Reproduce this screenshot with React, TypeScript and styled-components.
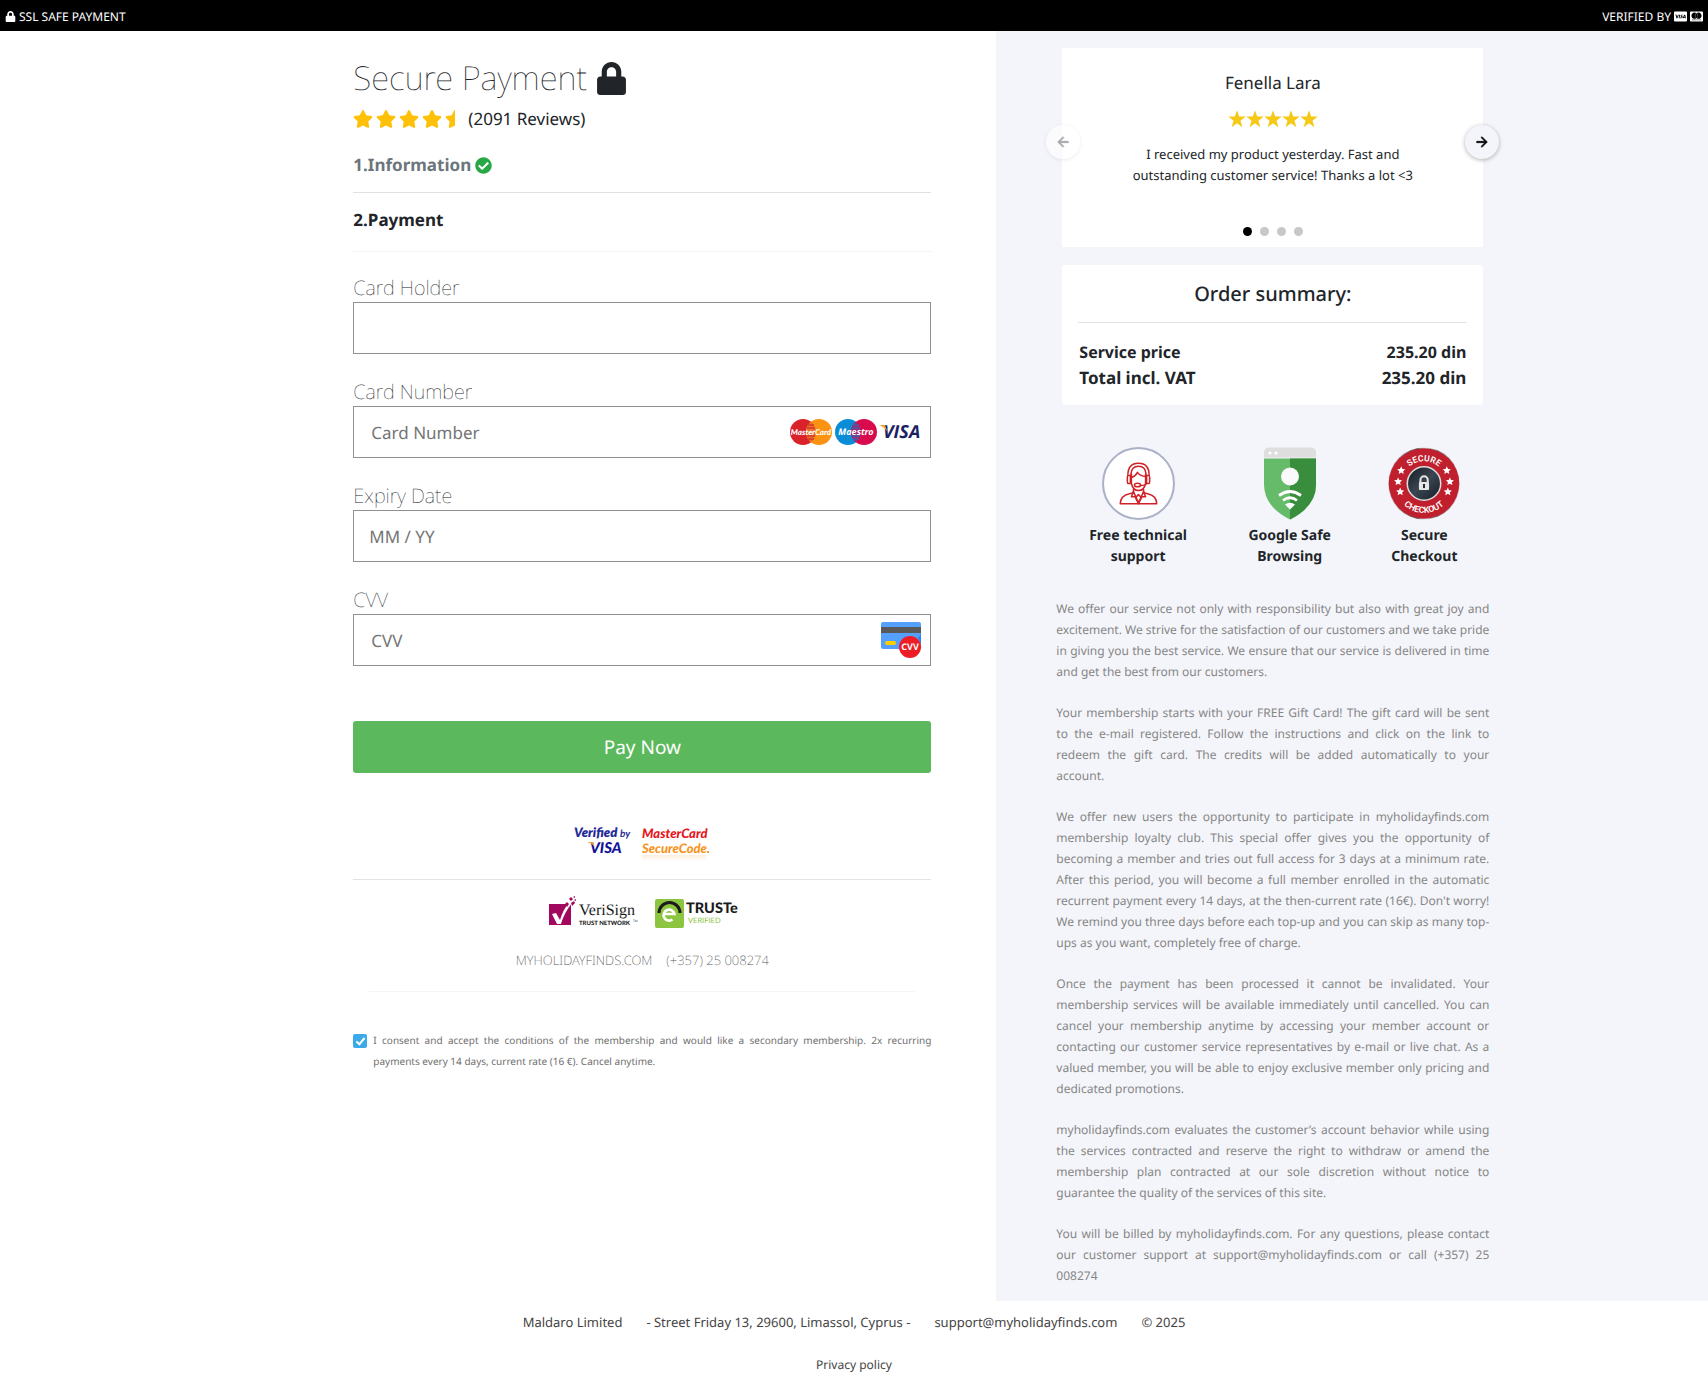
import React, { useId, useState } from "react";
import styled, { createGlobalStyle } from "styled-components";
import {
  FaLock,
  FaStar,
  FaStarHalf,
  FaCheckCircle,
  FaCcVisa,
  FaCcMastercard,
} from "react-icons/fa";
import { MdArrowBack, MdArrowForward } from "react-icons/md";

const fontStack = `"Noto Sans", "Open Sans", sans-serif`;

const GlobalStyle = createGlobalStyle`
  *, *::before, *::after { box-sizing: border-box; }
  body {
    margin: 0;
    background: #fff;
    color: #212529;
    font-family: ${fontStack};
    font-size: 16px;
    text-rendering: geometricPrecision;
  }
  h1, h2, h3, p, ul { margin: 0; padding: 0; }
  a { color: inherit; text-decoration: none; }
  svg { display: block; flex: none; }
`;

/* ---------- top bar ---------- */

const TopBar = styled.header`
  display: flex;
  justify-content: space-between;
  align-items: center;
  height: 31px;
  padding: 2px 5px 0;
  background: #000;
  color: #fff;
  font-size: 12px;
`;

const TopBarItem = styled.div`
  display: flex;
  align-items: center;
  gap: 3px;
`;

/* ---------- page columns ---------- */

const Columns = styled.main`
  display: grid;
  grid-template-columns: 7fr 5fr;
`;

const CheckoutSide = styled.section`
  display: flex;
  justify-content: flex-end;
  padding: 25px 65px 40px;
`;

const CheckoutColumn = styled.div`
  width: 100%;
  max-width: 578px;
`;

const SummarySide = styled.aside`
  padding: 17px 66px 15px;
  background: #f4f5fa;
`;

const SummaryColumn = styled.div`
  width: 100%;
  max-width: 421px;
`;

/* ---------- checkout ---------- */

const Title = styled.h1`
  display: flex;
  align-items: center;
  gap: 8px;
  font-size: 33px;
  font-weight: 100;
  line-height: 44px;
`;

const Rating = styled.div`
  display: flex;
  align-items: center;
  gap: 3px;
  margin-top: 5px;
  font-size: 17px;
  line-height: 28px;
`;

const RatingStars = styled.div`
  display: flex;
  gap: 3px;
  color: #ffc107;
`;

const Step = styled.h2<{ $done?: boolean }>`
  display: flex;
  align-items: center;
  gap: 4px;
  padding: 14px 0 ${(p) => (p.$done ? 14 : 18)}px;
  margin-top: ${(p) => (p.$done ? 5 : 0)}px;
  border-bottom: 1px solid ${(p) => (p.$done ? "#dee2e6" : "#f3f3f5")};
  color: ${(p) => (p.$done ? "#6c757d" : "#212529")};
  font-size: 17px;
  font-weight: 700;
  line-height: 26px;

  svg { color: #28a745; }
`;

const PaymentForm = styled.form`
  display: flex;
  flex-direction: column;
  gap: 24px;
  padding-top: 22px;
`;

const FieldLabel = styled.label`
  display: block;
  font-size: 20px;
  font-weight: 100;
  line-height: 28px;
`;

const FieldBox = styled.div`
  display: flex;
  align-items: center;
  height: 52px;
  padding-right: 9px;
  border: 1px solid #8f8f8f;
  background: #fff;
`;

const FieldInput = styled.input<{ $indent: number }>`
  flex: 1;
  min-width: 0;
  height: 100%;
  padding: 0 0 0 ${(p) => p.$indent}px;
  border: 0;
  outline: 0;
  background: transparent;
  color: #212529;
  font-family: inherit;
  font-size: 17px;
  text-rendering: inherit;

  &::placeholder { color: #757575; opacity: 1; }
`;

const PayButton = styled.button`
  height: 52px;
  margin-top: 31px;
  border: 0;
  border-radius: 3px;
  background: #5cb85c;
  color: #fff;
  font-family: inherit;
  font-size: 19px;
  text-rendering: inherit;
  cursor: pointer;
`;

const LogoRow = styled.div<{ $ruled?: boolean }>`
  display: flex;
  justify-content: center;
  gap: ${(p) => (p.$ruled ? 10 : 14)}px;
  padding: ${(p) => (p.$ruled ? "50px 0 14px" : "14px 0 10px")};
  border-bottom: ${(p) => (p.$ruled ? "1px solid #e3e3e5" : "0")};
`;

const ContactRow = styled.div`
  display: flex;
  justify-content: center;
  gap: 14px;
  margin: 0 16px;
  padding: 6px 0 19px;
  border-bottom: 1px solid #f5f5f7;
  color: #555;
  font-size: 13px;
  font-weight: 200;
  line-height: 24px;
`;

const Consent = styled.label`
  display: flex;
  gap: 6px;
  margin-top: 38px;
  color: #6f6f6f;
  font-size: 10px;
  line-height: 21px;
  text-align: justify;
`;

const ConsentBox = styled.input`
  flex: none;
  display: grid;
  place-content: center;
  appearance: none;
  width: 14px;
  height: 14px;
  margin: 4px 0 0;
  border-radius: 2px;
  background: #3ba9ea;

  &:checked::after {
    content: "";
    width: 5px;
    height: 9px;
    margin-bottom: 2px;
    border: solid #fff;
    border-width: 0 2px 2px 0;
    transform: rotate(40deg);
  }
`;

/* ---------- testimonial ---------- */

const Testimonial = styled.section`
  position: relative;
  display: flex;
  flex-direction: column;
  align-items: center;
  height: 199px;
  padding: 22px 64px 0;
  background: #fff;
  text-align: center;
`;

const Reviewer = styled.h3`
  font-size: 17px;
  font-weight: 400;
  line-height: 26px;
`;

const ReviewStars = styled.div`
  display: flex;
  margin: 14px 0 16px;
  color: #f7c815;
`;

const ReviewText = styled.p`
  font-size: 13px;
  line-height: 21px;
`;

const Dots = styled.div`
  display: flex;
  gap: 8px;
  margin: auto 0 11px;
`;

const Dot = styled.button<{ $active: boolean }>`
  width: 9px;
  height: 9px;
  padding: 0;
  border: 0;
  border-radius: 50%;
  background: ${(p) => (p.$active ? "#000" : "#c8c8c8")};
`;

const Arrow = styled.button<{ $side: "left" | "right" }>`
  position: absolute;
  top: 77px;
  ${(p) => p.$side}: -16px;
  display: grid;
  place-content: center;
  width: 34px;
  height: 34px;
  padding: 0;
  border: 0;
  border-radius: 50%;
  background: ${(p) => (p.disabled ? "rgba(255, 255, 255, 0.6)" : "#f4f5fa")};
  box-shadow: 0 1px 4px rgba(0, 0, 0, ${(p) => (p.disabled ? 0.08 : 0.3)});
  color: ${(p) => (p.disabled ? "#a5a5a8" : "#000")};

  svg { stroke: currentColor; stroke-width: 1px; }
  path[fill="none"] { stroke: none; }
`;

/* ---------- order summary ---------- */

const OrderCard = styled.section`
  margin-top: 18px;
  padding: 14px 16px 14px;
  border-radius: 4px;
  background: #fff;
`;

const OrderTitle = styled.h2`
  padding-bottom: 13px;
  border-bottom: 1px solid #e3e3e5;
  font-size: 20px;
  font-weight: 500;
  line-height: 30px;
  text-align: center;
`;

const OrderTable = styled.table`
  width: 100%;
  margin-top: 16px;
  border-collapse: collapse;
  font-weight: 700;
  line-height: 26px;

  th, td { padding: 0 1px; }
  th { text-align: left; }
  td { text-align: right; }
`;

const OrderRow = styled.tr<{ $total?: boolean }>`
  font-size: ${(p) => (p.$total ? 17 : 16)}px;
`;

const Badges = styled.div`
  display: grid;
  grid-template-columns: 9fr 9fr 7fr;
  margin-top: 42px;
`;

const Badge = styled.figure`
  display: flex;
  flex-direction: column;
  align-items: center;
  gap: 5px;
  margin: 0;
  font-size: 14px;
  font-weight: 700;
  line-height: 21px;
  text-align: center;
`;

/* Runs slightly wider than the cards above it. */
const Terms = styled.div`
  display: flex;
  flex-direction: column;
  gap: 20px;
  margin: 31px -6px 0;
  color: #868686;
  font-size: 12px;
  line-height: 21px;
  text-align: justify;
`;

/* ---------- footer ---------- */

const Footer = styled.footer`
  display: flex;
  flex-direction: column;
  align-items: center;
  gap: 21px;
  padding: 11px 0;
  color: #444;
  font-size: 13px;
  line-height: 21px;
`;

const FooterLine = styled.div`
  display: flex;
  gap: 24px;
`;

const FooterLink = styled.a`
  font-size: 12px;
`;

/* ---------- drawings ---------- */

const SharpStar = () => (
  <svg width="18" height="18" viewBox="0 0 18 18" fill="currentColor" aria-hidden="true">
    <path d="M9 0.300l2.200 6.300h6.500l-5.200 4.100 1.900 6.600-5.400-4-5.400 4 1.900-6.600L0.300 6.600h6.500z" />
  </svg>
);

const CardBrands = () => (
  <svg width="132" height="28" viewBox="0 0 132 28" role="img" aria-label="MasterCard, Maestro, Visa">
    <circle cx="14" cy="14" r="13" fill="#d9222a" />
    <circle cx="30" cy="14" r="13" fill="#fb9211" />
    <path d="M22 3.800a13 13 0 0 1 0 20.400a13 13 0 0 1 0-20.400z" fill="#e9702a" />
    <path d="M19 7h6M18 10h8M18 18h8M19 21h6" stroke="#c91f28" strokeWidth="1" />
    <text x="22" y="17" textAnchor="middle" fill="#fff" fontFamily="Lato" fontSize="8" fontWeight="900" fontStyle="italic">MasterCard</text>
    <circle cx="59" cy="14" r="13" fill="#0a8dd6" />
    <circle cx="75" cy="14" r="13" fill="#d90b4c" />
    <path d="M67 3.800a13 13 0 0 1 0 20.400a13 13 0 0 1 0-20.400z" fill="#9d2a73" />
    <path d="M64 7h6M63 10h8M63 18h8M64 21h6" stroke="#1a78c4" strokeWidth="1" />
    <text x="67" y="17" textAnchor="middle" fill="#fff" fontFamily="Open Sans" fontSize="9" fontWeight="700" fontStyle="italic">Maestro</text>
    <text x="94" y="20" fill="#1a2263" fontFamily="Open Sans" fontSize="18" fontWeight="700" fontStyle="italic">VISA</text>
    <path d="M90 7h6l2.500 7q-3-5-8.500-7z" fill="#f2a52c" />
  </svg>
);

const CvvCard = () => (
  <svg width="40" height="36" viewBox="0 0 40 36" role="img" aria-label="CVV">
    <rect x="0" y="0" width="40" height="27" rx="2" fill="#55a0fd" />
    <path d="M37 16l3-4v10z" fill="#2f80f0" />
    <rect x="0" y="5" width="40" height="6" fill="#595959" />
    <rect x="4" y="19" width="11" height="4" rx="2" fill="#fcd000" />
    <circle cx="29" cy="25" r="11" fill="#ee1c25" />
    <text x="29" y="28" textAnchor="middle" fill="#fff" fontFamily="Noto Sans" fontSize="9" fontWeight="700">CVV</text>
  </svg>
);

const VerifiedByVisa = () => (
  <svg width="58" height="42" viewBox="0 0 58 42" role="img" aria-label="Verified by Visa">
    <text x="0" y="14" fill="#1f2a97" fontFamily="Lato" fontSize="13" fontWeight="800" fontStyle="italic">Verified</text>
    <text x="46" y="14" fill="#1f2a97" fontFamily="Lato" fontSize="10" fontWeight="700" fontStyle="italic">by</text>
    <text x="16" y="30" fill="#10129a" fontFamily="Lato" fontSize="15" fontWeight="900" fontStyle="italic">VISA</text>
    <path d="M13 19h6l1.500 5q-2.500-4-7.500-5z" fill="#f2a52c" />
  </svg>
);

const SecureCode = () => (
  <svg width="69" height="42" viewBox="0 0 69 42" role="img" aria-label="MasterCard SecureCode">
    <defs>
      <linearGradient id="codeFade" x1="0" y1="0" x2="0" y2="1">
        <stop offset="0" stopColor="#f7941d" stopOpacity="0.16" />
        <stop offset="1" stopColor="#f7941d" stopOpacity="0" />
      </linearGradient>
    </defs>
    <text x="0" y="15" fill="#e8141c" fontFamily="Lato" fontSize="13" fontWeight="900" fontStyle="italic">MasterCard</text>
    <text x="0" y="30" fill="#f7941d" fontFamily="Lato" fontSize="13" fontWeight="900" fontStyle="italic">SecureCode.</text>
    <rect x="0" y="32" width="64" height="6" fill="url(#codeFade)" />
  </svg>
);

const VeriSign = () => (
  <svg width="96" height="38" viewBox="-4 0 96 38" role="img" aria-label="VeriSign Trust Network">
    <rect x="0" y="10" width="22" height="21" fill="#a3085f" />
    <path d="M3 20l4-1 4 7q3-10 8-16l4-1q-8 10-11 21h-4z" fill="#fff" />
    <path d="M16 10l2-2 2 2-2 3zM20 5l2-2 2 2-2 2zM22 9l3-2 1 2-3 3zM24 3l2-1v2zM19 15l2-2 1 2-2 2zM25 6l2-1v2z" fill="#a3085f" />
    <text x="30" y="21" fill="#1b1b1b" fontFamily="Liberation Serif" fontSize="16">VeriSign</text>
    <text x="30" y="31" fill="#1b1b1b" fontFamily="Lato" fontSize="6" fontWeight="900">TRUST NETWORK</text>
    <text x="84" y="28" fill="#1b1b1b" fontFamily="Lato" fontSize="3">TM</text>
  </svg>
);

const Truste = () => (
  <svg width="84" height="38" viewBox="0 0 84 38" role="img" aria-label="TRUSTe Verified">
    <rect x="0" y="5" width="29" height="29" rx="2" fill="#8cc540" />
    <path d="M4 19a10.500 10.500 0 0 1 21 0" fill="none" stroke="#1b1b1b" strokeWidth="3" />
    <path d="M10 20h9.500a5.500 5.500 0 1 0-2 5.500" fill="none" stroke="#fff" strokeWidth="2.600" />
    <text x="31" y="19" fill="#1b1b1b" fontFamily="Lato" fontSize="14.500" fontWeight="900">TRUSTe</text>
    <text x="33" y="29" fill="#8cc540" fontFamily="Lato" fontSize="7.500">VERIFIED</text>
  </svg>
);

const SupportBadge = () => (
  <svg width="73" height="73" viewBox="0 0 72 72" aria-hidden="true">
    <circle cx="36" cy="36" r="35" fill="#fff" stroke="#abb2c8" strokeWidth="2" />
    <g fill="none" stroke="#d02127" strokeWidth="1.500" strokeLinejoin="round" strokeLinecap="round">
      <path d="M29 27v9q1.500 7 7 7t7-7v-9" />
      <path d="M29 30q4-1 6-5 3 4 8 4" />
      <path d="M25.500 28q0-12 10.500-12t10.500 12" />
      <path d="M28.500 27q.5-8 7.500-8t7.500 8" />
      <path d="M28 28h-2q-1 0-1 2v4q0 2 1 2h2zM44 28h2q1 0 1 2v4q0 2-1 2h-2z" />
      <ellipse cx="35" cy="37.500" rx="3" ry="1.800" />
      <path d="M38 38q5 0 6-2" />
      <path d="M31 42v3l-4 1q-9 2-9 10h36q0-8-9-10l-4-1v-3" />
      <path d="M31 44l5 11 5-11M31 44l-2 5 4 0M41 44l2 5-4 0M36 47l3 3-3 6-3-6z" />
    </g>
  </svg>
);

const ShieldBadge = () => (
  <svg width="54" height="73" viewBox="0 0 54 72" aria-hidden="true">
    <path d="M1 11h52v26q0 22-26 35q-26-13-26-35z" fill="#66bb6a" />
    <path d="M27 11h26v26q0 22-26 35z" fill="#388e3c" />
    <path d="M1 10v-5q0-5 5-5h42q5 0 5 5v5z" fill="#dedede" />
    <circle cx="7" cy="5.500" r="1.600" fill="#fff" />
    <circle cx="13" cy="5.500" r="1.600" fill="#fff" />
    <circle cx="27" cy="29" r="9" fill="#fafafa" />
    <path d="M16 48q11-8 22 0M20 53q7-5.500 14 0" fill="none" stroke="#fff" strokeWidth="2.800" />
    <path d="M22 57q5-3.500 10 0l-5 5z" fill="#fff" />
  </svg>
);

const sealStars = [
  [13, 23], [10, 34], [12, 44], [58, 23], [61, 34], [59, 44],
];

const SealBadge = () => (
  <svg width="72" height="73" viewBox="0 0 71 72" aria-hidden="true">
    <defs>
      <linearGradient id="sealRim" x1="0" y1="0" x2="1" y2="0">
        <stop offset="0" stopColor="#d8d8dc" />
        <stop offset="0.400" stopColor="#55555a" />
        <stop offset="0.500" stopColor="#e2e2e6" />
        <stop offset="0.700" stopColor="#77777c" />
        <stop offset="1" stopColor="#e8e8ea" />
      </linearGradient>
      <linearGradient id="sealCore" x1="0" y1="0" x2="1" y2="1">
        <stop offset="0" stopColor="#151c24" />
        <stop offset="0.500" stopColor="#3a4651" />
        <stop offset="1" stopColor="#151c24" />
      </linearGradient>
      <path id="sealTop" d="M13.500 36a22 22 0 0 1 44 0" />
      <path id="sealBottom" d="M6.500 36a29 29 0 0 0 58 0" />
    </defs>
    <circle cx="35.500" cy="36" r="35.500" fill="url(#sealRim)" />
    <circle cx="35.500" cy="36" r="34.800" fill="#c01f2e" />
    <circle cx="35.500" cy="36" r="16.500" fill="url(#sealCore)" stroke="#dcdcde" strokeWidth="1.500" />
    <g fill="#fff" fontFamily="Roboto" fontSize="8.500" fontWeight="600" textAnchor="middle">
      <text><textPath href="#sealTop" startOffset="50%">SECURE</textPath></text>
      <text><textPath href="#sealBottom" startOffset="50%">CHECKOUT</textPath></text>
    </g>
    {sealStars.map(([x, y]) => (
      <path
        key={`${x}-${y}`}
        transform={`translate(${x} ${y})`}
        d="M0-4l1.200 2.600 2.800.3-2.100 1.900.6 2.800-2.500-1.400-2.500 1.400.6-2.800-2.100-1.900 2.800-.3z"
        fill="#fff"
      />
    ))}
    <path d="M32 35v-2.500a3.600 3.600 0 0 1 7.200 0v2.500" fill="none" stroke="#e6e6e6" strokeWidth="2" />
    <rect x="30.500" y="34.500" width="10" height="8" rx="1" fill="#e6e6e6" />
    <path d="M35.500 36.500v4" stroke="#222b34" strokeWidth="2" />
  </svg>
);

/* ---------- content ---------- */

interface FieldProps {
  label: string;
  placeholder?: string;
  indent?: number;
  children?: React.ReactNode;
}

const Field = ({ label, placeholder, indent = 17, children }: FieldProps) => {
  const id = useId();
  return (
    <div>
      <FieldLabel htmlFor={id}>{label}</FieldLabel>
      <FieldBox>
        <FieldInput id={id} type="text" placeholder={placeholder} $indent={indent} />
        {children}
      </FieldBox>
    </div>
  );
};

const terms = [
  "We offer our service not only with responsibility but also with great joy and excitement. We strive for the satisfaction of our customers and we take pride in giving you the best service. We ensure that our service is delivered in time and get the best from our customers.",
  "Your membership starts with your FREE Gift Card! The gift card will be sent to\u00a0the e-mail registered. Follow the instructions and click on the link to redeem the gift card. The credits will be added automatically to your account.",
  "We offer new users the opportunity to participate in myholidayfinds.com membership loyalty club. This special offer gives you the opportunity of becoming a member and tries out full access for 3 days at a minimum rate. After this period, you will become a full member enrolled in the automatic recurrent payment every 14 days, at the then-current rate (16€). Don't worry! We remind you three days before each top-up and you can skip as many top-ups as you want, completely free of charge.",
  "Once the payment has been processed it cannot be invalidated. Your membership services will be available immediately until cancelled. You can cancel your membership anytime by accessing your member account or contacting our customer service representatives by e-mail or live chat. As a valued member, you will be able to enjoy exclusive member only pricing and dedicated promotions.",
  "myholidayfinds.com evaluates the customer’s account behavior while using the services contracted and reserve the right to withdraw or amend the membership plan contracted at our sole discretion without notice to guarantee the quality of the services of this site.",
  "You will be billed by myholidayfinds.com. For any questions, please contact our customer support at support@myholidayfinds.com or call (+357) 25 008274",
];

export default function App() {
  const [accepted, setAccepted] = useState(true);

  return (
    <>
      <GlobalStyle />
      <TopBar>
        <TopBarItem>
          <FaLock size={11} />
          SSL SAFE PAYMENT
        </TopBarItem>
        <TopBarItem>
          VERIFIED BY
          <FaCcVisa size={13} />
          <FaCcMastercard size={13} />
        </TopBarItem>
      </TopBar>

      <Columns>
        <CheckoutSide>
          <CheckoutColumn>
            <Title>
              Secure Payment
              <FaLock size={33} />
            </Title>
            <Rating>
              <RatingStars role="img" aria-label="4.5 out of 5">
                {[0, 1, 2, 3].map((i) => (
                  <FaStar key={i} size={20} />
                ))}
                <FaStarHalf size={20} />
              </RatingStars>
              (2091 Reviews)
            </Rating>

            <Step $done>
              1.Information
              <FaCheckCircle size={17} />
            </Step>
            <Step>2.Payment</Step>

            <PaymentForm onSubmit={(e) => e.preventDefault()}>
              <Field label="Card Holder" />
              <Field label="Card Number" placeholder="Card Number">
                <CardBrands />
              </Field>
              <Field label="Expiry Date" placeholder="MM / YY" indent={15} />
              <Field label="CVV" placeholder="CVV">
                <CvvCard />
              </Field>
              <PayButton type="submit">Pay Now</PayButton>
            </PaymentForm>

            <LogoRow $ruled>
              <VerifiedByVisa />
              <SecureCode />
            </LogoRow>
            <LogoRow>
              <VeriSign />
              <Truste />
            </LogoRow>
            <ContactRow>
              <span>MYHOLIDAYFINDS.COM</span>
              <span>(+357) 25 008274</span>
            </ContactRow>

            <Consent>
              <ConsentBox
                type="checkbox"
                checked={accepted}
                onChange={(e) => setAccepted(e.target.checked)}
              />
              <span>
                I consent and accept the conditions of the membership and would like a secondary
                membership. 2x recurring payments every 14 days, current rate (16 €). Cancel anytime.
              </span>
            </Consent>
          </CheckoutColumn>
        </CheckoutSide>

        <SummarySide>
          <SummaryColumn>
            <Testimonial>
              <Reviewer>Fenella Lara</Reviewer>
              <ReviewStars role="img" aria-label="5 out of 5">
                {[0, 1, 2, 3, 4].map((i) => (
                  <SharpStar key={i} />
                ))}
              </ReviewStars>
              <ReviewText>
                I received my product yesterday. Fast and outstanding customer service! Thanks a lot
                &lt;3
              </ReviewText>
              <Dots>
                {[1, 2, 3, 4].map((n) => (
                  <Dot key={n} type="button" aria-label={`Review ${n}`} $active={n === 1} />
                ))}
              </Dots>
              <Arrow type="button" aria-label="Previous review" $side="left" disabled>
                <MdArrowBack size={16} />
              </Arrow>
              <Arrow type="button" aria-label="Next review" $side="right">
                <MdArrowForward size={16} />
              </Arrow>
            </Testimonial>

            <OrderCard>
              <OrderTitle>Order summary:</OrderTitle>
              <OrderTable>
                <tbody>
                  <OrderRow>
                    <th scope="row">Service price</th>
                    <td>235.20 din</td>
                  </OrderRow>
                  <OrderRow $total>
                    <th scope="row">Total incl. VAT</th>
                    <td>235.20 din</td>
                  </OrderRow>
                </tbody>
              </OrderTable>
            </OrderCard>

            <Badges>
              <Badge>
                <SupportBadge />
                <figcaption>Free technical<br />support</figcaption>
              </Badge>
              <Badge>
                <ShieldBadge />
                <figcaption>Google Safe<br />Browsing</figcaption>
              </Badge>
              <Badge>
                <SealBadge />
                <figcaption>Secure<br />Checkout</figcaption>
              </Badge>
            </Badges>

            <Terms>
              {terms.map((text) => (
                <p key={text}>{text}</p>
              ))}
            </Terms>
          </SummaryColumn>
        </SummarySide>
      </Columns>

      <Footer>
        <FooterLine>
          <span>Maldaro Limited</span>
          <span>- Street Friday 13, 29600, Limassol, Cyprus -</span>
          <a href="mailto:support@myholidayfinds.com">support@myholidayfinds.com</a>
          <span>© 2025</span>
        </FooterLine>
        <FooterLink href="#privacy">Privacy policy</FooterLink>
      </Footer>
    </>
  );
}
